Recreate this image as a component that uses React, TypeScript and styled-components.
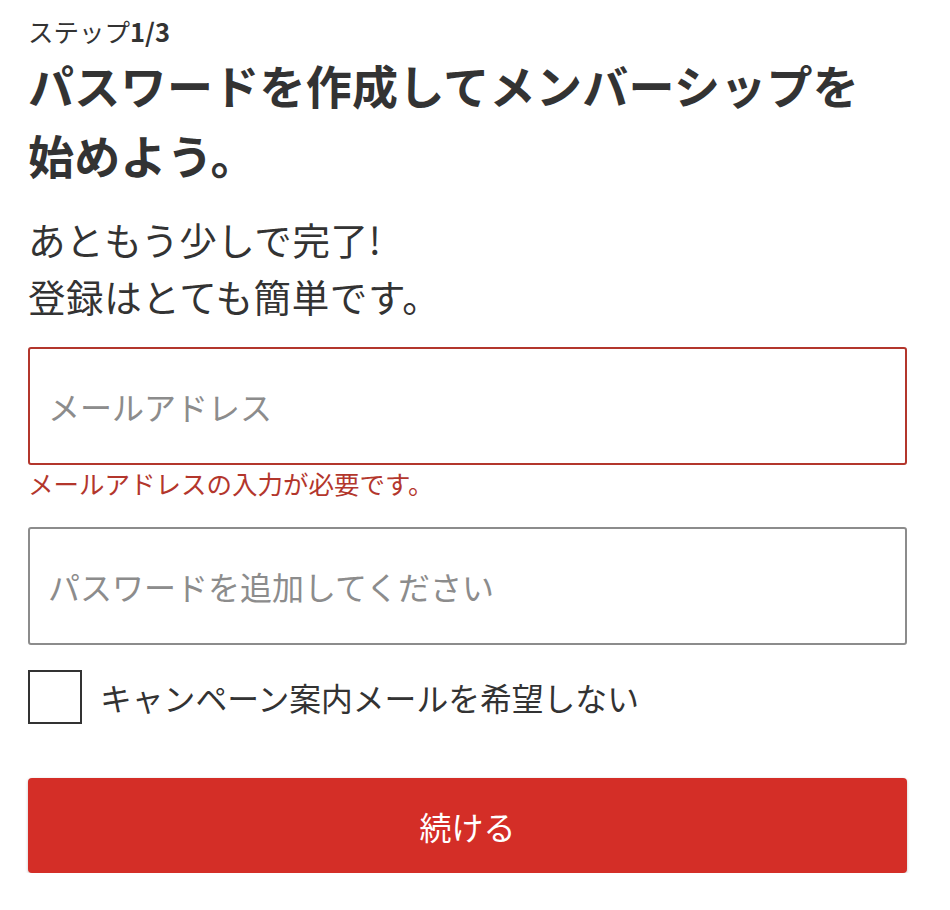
import styled, { createGlobalStyle } from "styled-components";

const GlobalStyle = createGlobalStyle`
  body {
    margin: 0;
    background: #fff;
    font-family: "Noto Sans CJK JP", "Noto Sans", sans-serif;
    color: #333;
  }
`;

function App() {
  return (
    <>
      <GlobalStyle />
      <Page>
        <Step>
          ステップ<b>1/3</b>
        </Step>
        <Title>パスワードを作成してメンバーシップを始めよう。</Title>
        <Lead>
          あともう少しで完了!
          <br />
          登録はとても簡単です。
        </Lead>
        <Field $error placeholder="メールアドレス" type="email" />
        <ErrorText>メールアドレスの入力が必要です。</ErrorText>
        <Field placeholder="パスワードを追加してください" type="password" />
        <CheckRow>
          <Box type="checkbox" />
          <span>キャンペーン案内メールを希望しない</span>
        </CheckRow>
        <Submit>続ける</Submit>
      </Page>
    </>
  );
}

const Page = styled.div`
  width: 879px;
  padding: 14px 0 0 28px;
  display: flex;
  flex-direction: column;
`;

const Step = styled.div`
  font-size: 25.5px;
  line-height: 34px;
  b {
    font-weight: 700;
  }
`;

const Title = styled.h1`
  margin: 1px 0 0;
  font-size: 46px;
  letter-spacing: 0.3px;
  font-weight: 700;
  line-height: 70px;
  padding-right: 30px;
`;

const Lead = styled.p`
  margin: 21px 0 0;
  font-size: 37.5px;
  letter-spacing: 0.6px;
  line-height: 57px;
  font-weight: 400;
`;

const Field = styled.input<{ $error?: boolean }>`
  box-sizing: border-box;
  width: 100%;
  height: 118px;
  margin-top: ${(p) => (p.$error ? "23px" : "26px")};
  padding: 0 18px;
  border: 2px solid ${(p) => (p.$error ? "#b3362c" : "#8c8c8c")};
  border-radius: 3px;
  font-family: inherit;
  font-size: 32px;
  color: #333;
  outline: none;
  &::placeholder {
    color: #8c8c8c;
  }
`;

const ErrorText = styled.div`
  color: #b3362c;
  font-size: 25.5px;
  line-height: 36px;
`;

const CheckRow = styled.label`
  display: flex;
  align-items: center;
  gap: 18px;
  margin-top: 25px;
  font-size: 31.8px;
`;

const Box = styled.input`
  appearance: none;
  margin: 0;
  box-sizing: border-box;
  width: 54px;
  height: 54px;
  border: 2px solid #333;
  background: #fff;
  flex-shrink: 0;
`;

const Submit = styled.button`
  margin-top: 54px;
  height: 95px;
  width: 100%;
  border: none;
  border-radius: 4px;
  background: #d42e27;
  color: #fff;
  font-family: inherit;
  font-size: 32px;
  box-shadow: 0 1px 3px rgba(0, 0, 0, 0.25);
`;

export default App;
